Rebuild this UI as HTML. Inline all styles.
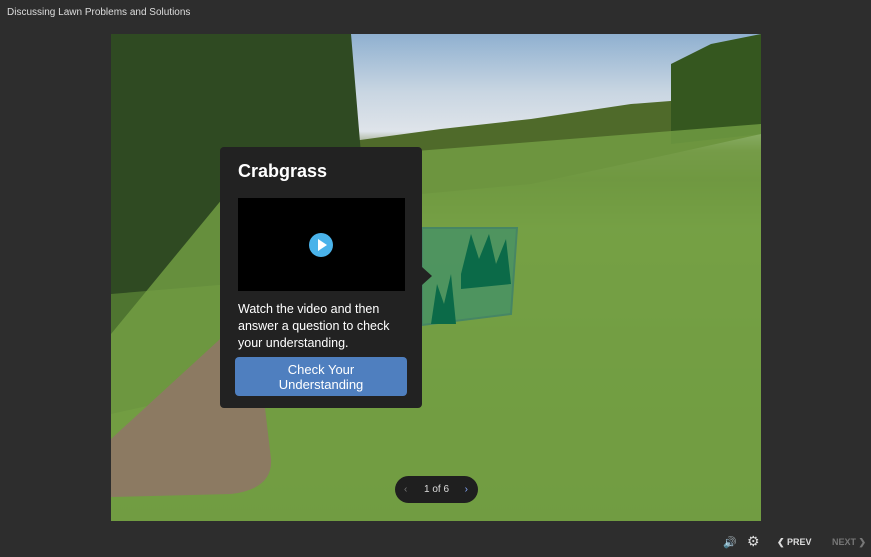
<!DOCTYPE html>
<html><head><style>
body{margin:0;width:871px;height:557px;background:#2d2d2d;position:relative;overflow:hidden;font-family:"Liberation Sans",sans-serif}
.title{position:absolute;left:7px;top:7px;font-size:10px;color:#ddd}
.scene{position:absolute;left:111px;top:34px;width:650px;height:487px;overflow:hidden;
background:linear-gradient(180deg,#8fb0d0 0%,#c9d6e2 12%,#dfe4ea 20%,#7b8a55 24%,#5d7a32 30%,#7aa045 40%,#6c953c 70%,#668e38 100%)}
.panel{position:absolute;left:220px;top:147px;width:202px;height:261px;background:#222;border-radius:4px}
</style></head><body>
<div class="title">Discussing Lawn Problems and Solutions</div>
<div class="scene">
<svg width="650" height="487" style="position:absolute;left:0;top:0">
<polygon points="220,110 330,95 420,85 520,70 650,60 650,100 560,120 420,150 310,160 220,165" fill="#4f6a2a"/>
<polygon points="560,30 600,10 650,0 650,100 560,110" fill="#35571f"/>
<polygon points="0,0 240,0 250,120 240,260 0,270" fill="#2f4a22"/>
<polygon points="0,260 240,240 250,300 180,340 0,380" fill="#4f7530"/>
<polygon points="140,130 650,90 650,487 0,487 0,300" fill="#74a045" opacity="0.8"/>
<path d="M0,405 L120,295 L150,340 L160,425 Q162,455 120,460 L0,463 Z" fill="#8c7a62"/>
<polygon points="311,194 406,194 400,280 311,291" fill="#2a8a7a" opacity="0.5" stroke="#1a6e84" stroke-width="2"/>
<polygon points="350,240 360,200 368,225 378,200 385,230 395,205 400,250 350,255" fill="#0b6a48"/>
<polygon points="320,290 326,250 333,270 340,240 345,290" fill="#0b6a48"/>
</svg>
</div>
<div class="panel">
<div style="position:absolute;left:18px;top:14px;color:#fff;font-weight:bold;font-size:18px">Crabgrass</div>
<div style="position:absolute;left:18px;top:51px;width:167px;height:93px;background:#000">
<div style="position:absolute;left:71px;top:35px;width:24px;height:24px;border-radius:50%;background:#4ab3ea"></div>
<div style="position:absolute;left:80px;top:41px;width:0;height:0;border-left:9px solid #fff;border-top:6px solid transparent;border-bottom:6px solid transparent"></div>
</div>
<div style="position:absolute;left:202px;top:120px;border-left:10px solid #222;border-top:9px solid transparent;border-bottom:9px solid transparent"></div>
<div style="position:absolute;left:18px;top:154px;color:#fff;font-size:12.5px;line-height:17px;width:175px">Watch the video and then answer a question to check your understanding.</div>
<div style="position:absolute;left:15px;top:210px;width:172px;height:39px;background:#4f7fbf;border-radius:4px;color:#fff;font-size:13px;line-height:15px;text-align:center;padding-top:5px;box-sizing:border-box">Check Your<br>Understanding</div>
</div>
<div style="position:absolute;left:395px;top:476px;width:83px;height:27px;background:#1f1f1f;border-radius:14px;color:#ddd;font-size:10px;line-height:27px;text-align:center">
<span style="position:absolute;left:9px;color:#777">&#8249;</span>1 of 6<span style="position:absolute;right:10px;color:#8af">&#8250;</span></div>
<div style="position:absolute;left:723px;top:536px;color:#ddd;font-size:11px">&#128266;</div>
<div style="position:absolute;left:747px;top:533px;color:#ddd;font-size:14px">&#9881;</div>
<div style="position:absolute;left:777px;top:537px;color:#ddd;font-size:9px;font-weight:bold">&#10094; PREV</div>
<div style="position:absolute;left:832px;top:537px;color:#777;font-size:9px;font-weight:bold">NEXT &#10095;</div>
</body></html>
